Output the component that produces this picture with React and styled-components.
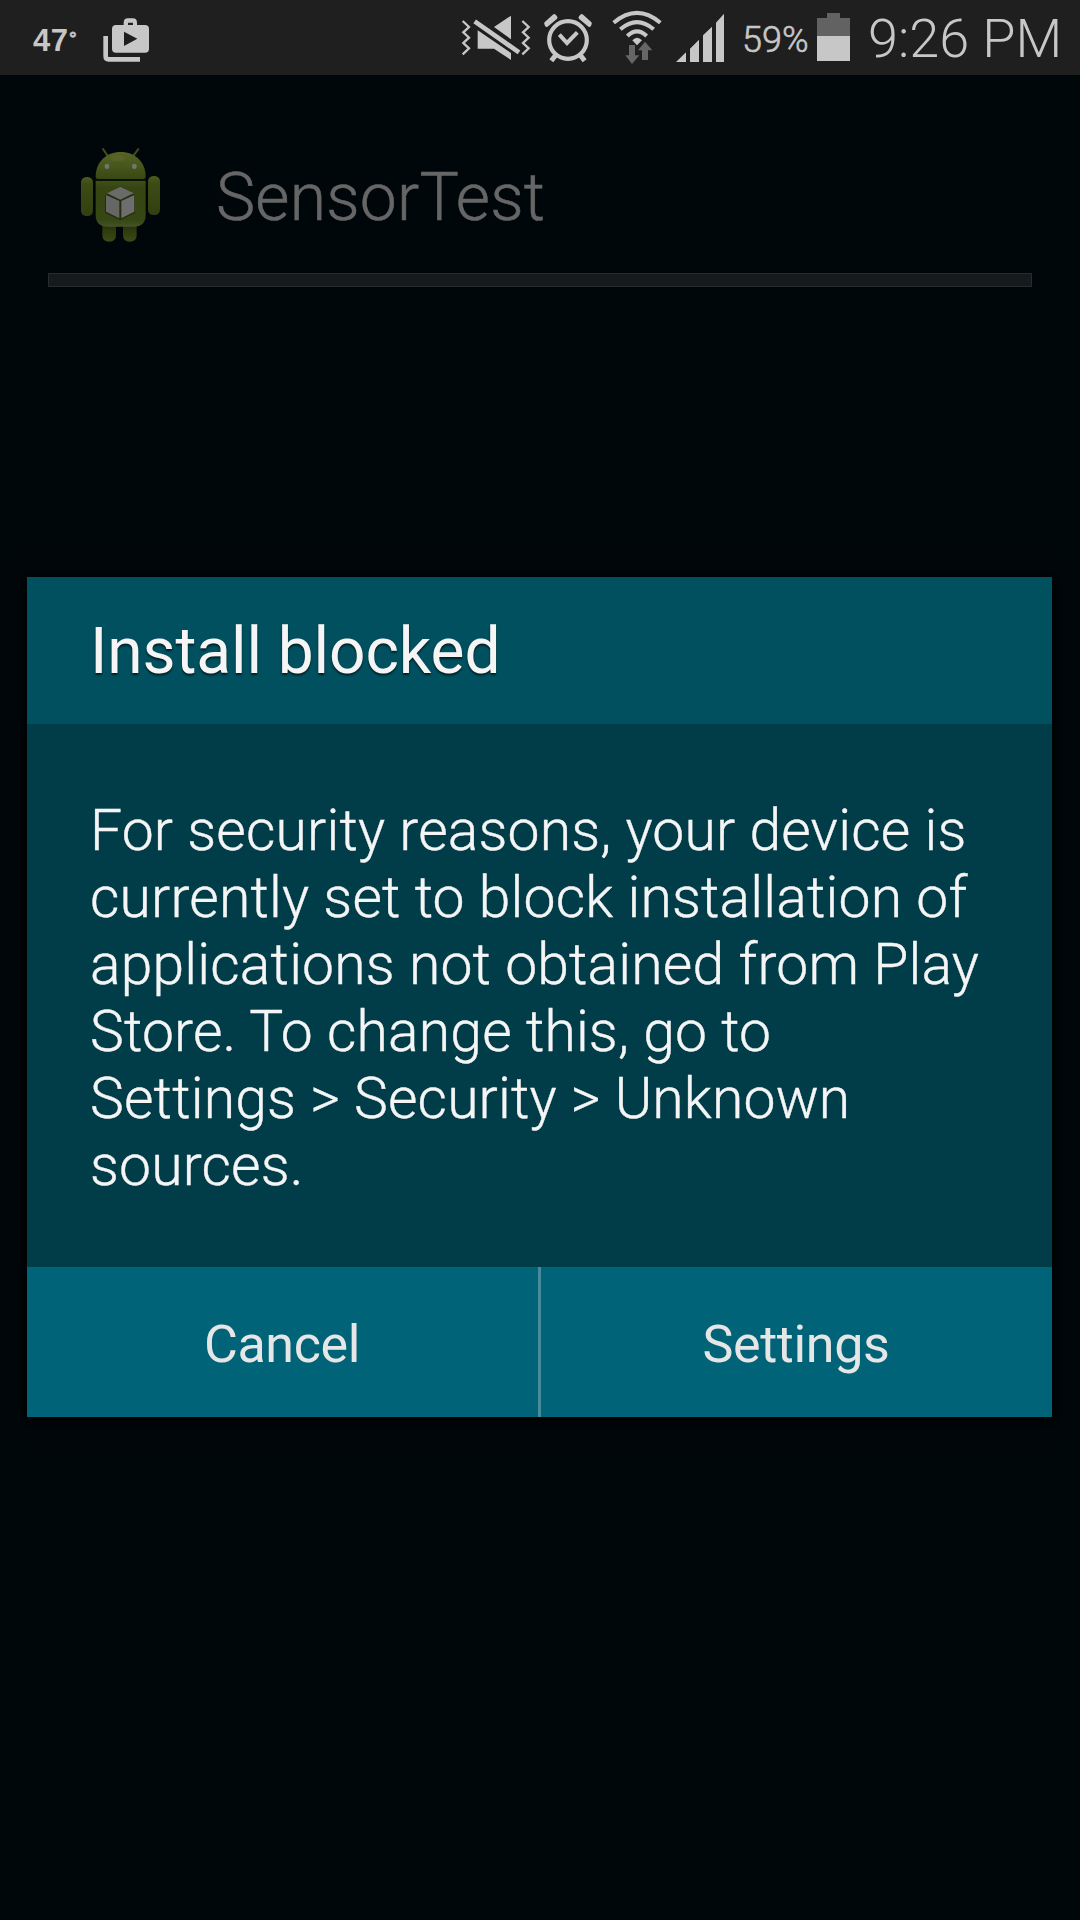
import React from "react";
import styled, { createGlobalStyle } from "styled-components";

const GlobalStyle = createGlobalStyle`
  * { box-sizing: border-box; }
  body {
    margin: 0;
    background: #00070a;
    font-family: Roboto, "Noto Sans", sans-serif;
  }
`;

const Screen = styled.div`
  position: relative;
  display: flex;
  flex-direction: column;
  width: 1080px;
  height: 1920px;
  overflow: hidden;
  background: #00070a;
`;

const StatusBar = styled.header`
  display: flex;
  align-items: center;
  flex: none;
  height: 75px;
  padding: 0 20px 0 33px;
  background: #1f1f1f;
  color: #c7c7c7;
`;

const Temperature = styled.span`
  width: 67px;
  padding-top: 3px;
  font: 700 31px/36px "Liberation Sans", Arial, sans-serif;
  letter-spacing: 0.4px;
  white-space: nowrap;
`;

const Degree = styled.span`
  margin-left: 1px;
  font-size: 18px;
  vertical-align: 7px;
  -webkit-text-stroke: 0.6px currentColor;
`;

const StatusIcons = styled.div`
  display: flex;
  align-items: center;
  margin-left: auto;
`;

const StatusIcon = styled.svg`
  display: block;
  flex: none;
  width: ${(p) => p.$width}px;
  height: 75px;
  margin-right: ${(p) => p.$gap || 0}px;
`;

const BatteryLevel = styled.span`
  width: 75px;
  padding-top: 4px;
  font-size: 36px;
  font-weight: 300;
  line-height: 42px;
  -webkit-text-stroke: 0.6px currentColor;
`;

const Clock = styled.time`
  width: 192px;
  padding-top: 2px;
  font-size: 54px;
  font-weight: 300;
  line-height: 64px;
  white-space: nowrap;
`;

const AppHeader = styled.section`
  display: flex;
  align-items: center;
  height: 120px;
  margin: 55px 0 0 60px;
`;

const AppIcon = styled.svg`
  width: 120px;
  height: 120px;
  margin-right: 36px;
`;

const AppName = styled.h1`
  margin: 0;
  padding-top: 15px;
  color: #666;
  font-size: 66px;
  font-weight: 300;
  line-height: 80px;
  letter-spacing: 0.2px;
  -webkit-text-stroke: 0.5px currentColor;
`;

const ProgressTrack = styled.div`
  height: 14px;
  margin: 23px 48px 0;
  border: 1px solid #272b2c;
  background: #141b1d;
`;

const ModalLayer = styled.div`
  position: absolute;
  inset: 75px 0 0;
  display: flex;
  align-items: center;
  padding: 0 28px 1px 27px;
`;

const Dialog = styled.section`
  display: flex;
  flex-direction: column;
  width: 100%;
  height: 840px;
  box-shadow: 0 2px 14px 2px #000;
`;

const DialogTitle = styled.h2`
  height: 147px;
  margin: 0;
  padding: 1px 63px 0;
  background: #01505f;
  color: #f5f5f5;
  font-size: 64px;
  font-weight: 400;
  line-height: 147px;
  letter-spacing: -0.1px;
  text-shadow: 0 2px 2px rgba(0, 0, 0, 0.6);
`;

const DialogBody = styled.p`
  flex: 1;
  margin: 0;
  padding: 73px 64px 0 63px;
  background: #013c49;
  color: #f5f5f5;
  font-size: 57px;
  font-weight: 300;
  line-height: 67px;
  letter-spacing: 0.18px;
  -webkit-text-stroke: 0.4px currentColor;
`;

const DialogActions = styled.div`
  display: grid;
  grid-template-columns: 1fr 1fr;
  column-gap: 3px;
  height: 150px;
  background: #478b9a;
`;

const ActionButton = styled.button`
  margin: 0;
  padding: 4px 1px 0 0;
  border: 0;
  background: #006378;
  color: #e6e6e6;
  font-family: inherit;
  font-size: 52px;
  letter-spacing: -0.35px;
`;

const INK = "#c7c7c7";

function PlayStoreIcon() {
  return (
    <StatusIcon $width={50} viewBox="300 0 150 225">
      <path fill={INK} fillRule="evenodd" d="M348 75H371V68Q371 55 384 55H398Q411 55 411 68V75H435Q447 75 447 87V147Q447 158 435 158H348Q336 158 336 147V87Q336 75 348 75ZM384 75H399V68H384ZM372 95V138L412 116Z" />
      <path fill="none" stroke={INK} strokeWidth="14" d="M317 108V169Q317 178 326 178H420" />
    </StatusIcon>
  );
}

function VibrateMuteIcon() {
  return (
    <StatusIcon $width={72} $gap={10} viewBox="30 0 216 225">
      <g fill="none" stroke={INK} strokeWidth="7">
        <path d="M38 63L57 81L40 97L57 113L40 129L57 145L38 163" />
        <path d="M217 63L236 81L219 97L236 113L219 129L236 145L217 163" />
      </g>
      <path fill={INK} d="M183 47V118L132 81ZM83 91L183 159V180L132 146H83Z" />
      <path stroke="#1f1f1f" strokeWidth="25" d="M73 62L209 160" />
      <path stroke={INK} strokeWidth="14" d="M74 64L207 157" />
    </StatusIcon>
  );
}

function AlarmIcon() {
  return (
    <StatusIcon $width={52} $gap={16} viewBox="276 0 156 225">
      <g fill="none" stroke={INK}>
        <circle cx="354" cy="120" r="56.5" strokeWidth="12.5" />
        <path strokeWidth="12" d="M328 104L351 129L382 97" />
        <path strokeWidth="11" strokeLinejoin="round" fill={INK} d="M288 70L313 48L317 53L290 75ZM420 70L395 48L391 53L418 75Z" />
        <path strokeWidth="15" d="M318 164L304 182M390 164L404 182" />
      </g>
    </StatusIcon>
  );
}

function WifiIcon() {
  return (
    <StatusIcon $width={54} $gap={10} viewBox="480 0 162 225">
      <g fill="none" stroke={INK} strokeWidth="12">
        <path d="M491 68Q561 9 631 68" />
        <path d="M511 88Q561 45 611 88" />
        <path d="M532 108Q561 80 590 108" />
      </g>
      <path fill={INK} d="M547 121Q561 105 576 121L561 136Z" />
      <path fill="#666" stroke="#1f1f1f" strokeWidth="3" paintOrder="stroke" d="M537 135H555V166H568L546 192L526 166H537ZM576 180V151H564L585 125L607 151H594V180Z" />
    </StatusIcon>
  );
}

function SignalIcon() {
  return (
    <StatusIcon $width={52} $gap={16} viewBox="672 0 156 225">
      <path fill={INK} d="M678 186L708 157V186ZM720 186V146L747 119V186ZM759 186V106L786 80V186ZM798 186V68L822 41V186Z" />
    </StatusIcon>
  );
}

function BatteryIcon() {
  return (
    <StatusIcon $width={33} $gap={18} viewBox="817 0 33 75">
      <path fill="#626262" d="M827 13H840V18H850V36H817V18H827Z" />
      <path fill={INK} d="M817 36H850V61H817Z" />
    </StatusIcon>
  );
}

function RobotIcon() {
  return (
    <AppIcon viewBox="0 0 360 360">
      <defs>
        <linearGradient id="head" x1="0" y1="0" x2="0" y2="1">
          <stop offset="0" stopColor="#566322" />
          <stop offset="0.4" stopColor="#4a5a1f" />
          <stop offset="1" stopColor="#384812" />
        </linearGradient>
        <linearGradient id="torso" x1="0" y1="0" x2="0" y2="1">
          <stop offset="0" stopColor="#3f5017" />
          <stop offset="0.15" stopColor="#364612" />
          <stop offset="0.85" stopColor="#364614" />
          <stop offset="1" stopColor="#465327" />
        </linearGradient>
        <linearGradient id="arm" x1="0" y1="0" x2="0" y2="1">
          <stop offset="0" stopColor="#4d5c1e" />
          <stop offset="0.18" stopColor="#3c4c14" />
          <stop offset="1" stopColor="#314010" />
        </linearGradient>
        <linearGradient id="leg" x1="0" y1="0" x2="0" y2="1">
          <stop offset="0" stopColor="#222d0a" />
          <stop offset="0.5" stopColor="#303e0f" />
          <stop offset="1" stopColor="#3d4b19" />
        </linearGradient>
      </defs>
      <path d="M129 57L142 76M235 57L221 76" stroke="#40501d" strokeWidth="6" strokeLinecap="round" />
      <path fill="url(#leg)" d="M127 278H168V315Q168 335 147 335Q127 335 127 315ZM189 278H230V315Q230 335 209 335Q189 335 189 315Z" />
      <rect x="63" y="141" width="36" height="117" rx="16" fill="url(#arm)" />
      <rect x="264" y="138" width="36" height="117" rx="16" fill="url(#arm)" />
      <path fill="url(#head)" d="M107 140C107 97 138 66 182 66C226 66 257 97 257 140Q257 147 250 147H114Q107 147 107 140Z" />
      <ellipse cx="172" cy="85" rx="22" ry="9" fill="#6f6c35" opacity="0.35" />
      <ellipse cx="141" cy="109" rx="7" ry="8" fill="#737470" />
      <ellipse cx="223" cy="109" rx="7" ry="8" fill="#737470" />
      <path fill="url(#torso)" d="M107 152H257V254Q257 290 220 290H144Q107 290 107 254Z" />
      <path stroke="#0a1007" strokeWidth="5" d="M107 150H257" />
      <path fill="#222f0b" d="M181 169L225 194V249L181 270L135 249V196Z" />
      <path fill="#6a6a6a" d="M181 170L221 190L181 209L141 190Z" />
      <path fill="#666" d="M138 195L178 213V265L138 245Z" />
      <path fill="#6e6e6e" d="M184 213L223 195V245L184 265Z" />
    </AppIcon>
  );
}

export default function App() {
  return (
    <Screen>
      <GlobalStyle />
      <StatusBar>
        <Temperature>47<Degree>°</Degree></Temperature>
        <PlayStoreIcon />
        <StatusIcons>
          <VibrateMuteIcon />
          <AlarmIcon />
          <WifiIcon />
          <SignalIcon />
          <BatteryLevel>59%</BatteryLevel>
          <BatteryIcon />
          <Clock>9:26 PM</Clock>
        </StatusIcons>
      </StatusBar>
      <AppHeader>
        <RobotIcon />
        <AppName>SensorTest</AppName>
      </AppHeader>
      <ProgressTrack />
      <ModalLayer>
        <Dialog>
          <DialogTitle>Install blocked</DialogTitle>
          <DialogBody>
            For security reasons, your device is currently set to block installation of
            applications not obtained from Play Store. To change this, go to
            Settings &gt; Security &gt; Unknown sources.
          </DialogBody>
          <DialogActions>
            <ActionButton>Cancel</ActionButton>
            <ActionButton>Settings</ActionButton>
          </DialogActions>
        </Dialog>
      </ModalLayer>
    </Screen>
  );
}
